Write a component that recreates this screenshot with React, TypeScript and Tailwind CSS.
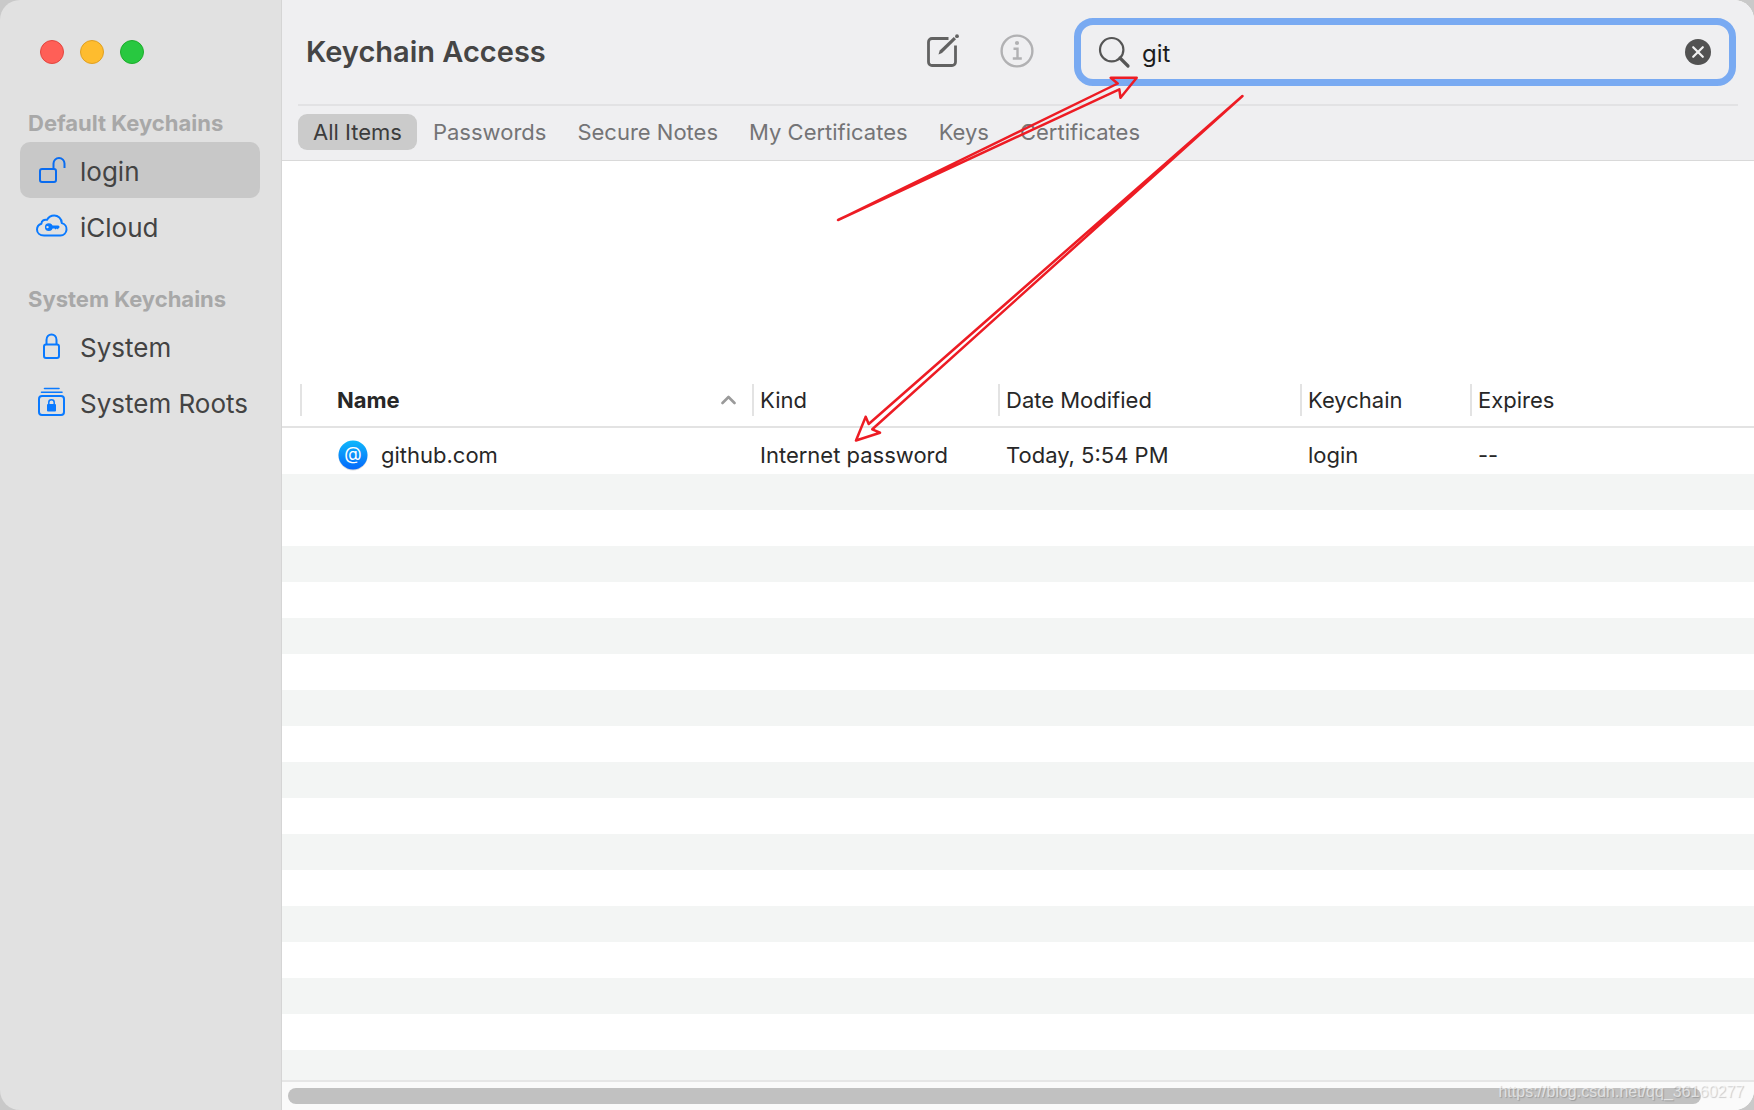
import { useState } from 'react'
import type { ReactNode } from 'react'

const tabs = ['All Items', 'Passwords', 'Secure Notes', 'My Certificates', 'Keys', 'Certificates']

const items = [
  { name: 'github.com', kind: 'Internet password', modified: 'Today, 5:54 PM', keychain: 'login', expires: '--' },
]

function UnlockedIcon() {
  return (
    <svg width="32" height="32" viewBox="0 0 32 32" fill="none" stroke="#0a6cf0" strokeWidth="2">
      <rect x="4" y="15" width="16" height="13" rx="2" />
      <path d="M17.500 15V9.500a5.500 5.500 0 0 1 11 0V14" />
    </svg>
  )
}

function CloudKeyIcon() {
  return (
    <svg width="32" height="32" viewBox="0 1 32 32" fill="none" stroke="#0a7aff" strokeWidth="2">
      <path d="M8 26.500h16.500a6.300 6.300 0 0 0 1.300-12.400C25.600 9.500 22 6.500 18.200 6.500c-3.200 0-5.800 1.700-7.200 4.400-2.800-.9-5.500.8-5.600 3.900C2.700 15.700 1 17.900 1 20.500c0 3.500 2.900 6 7 6z" strokeLinejoin="round" />
      <path d="M12.800 14.200a3.900 3.900 0 1 1 0 7.800 3.900 3.900 0 0 1 0-7.800zm-1.300 2.700a1.200 1.200 0 1 0 0 2.400 1.200 1.200 0 0 0 0-2.400z" fill="#0a7aff" fillRule="evenodd" stroke="none" />
      <path d="M15.500 16.600h7l1.300 1.300-1.400 1.500-.4 1.200-1.300-1-1 1-1.200-1h-3z" fill="#0a7aff" stroke="none" />
    </svg>
  )
}

function LockIcon() {
  return (
    <svg width="32" height="32" viewBox="0 0 32 32" fill="none" stroke="#0a7aff" strokeWidth="2">
      <rect x="8" y="14.500" width="15" height="13.500" rx="2" />
      <path d="M10.500 14.500V10c0-3.300 2.200-5.500 5-5.500s5 2.200 5 5.500v4.500" />
    </svg>
  )
}

function RootsIcon() {
  return (
    <svg width="32" height="32" viewBox="0 0 32 32" fill="none" stroke="#0a7aff" strokeWidth="2">
      <rect x="3" y="10" width="25" height="19" rx="3" />
      <path d="M5.500 6.200h20.500M8.500 2.500h14.500" strokeWidth="1.600" strokeLinecap="round" />
      <rect x="11" y="18" width="9" height="7.500" rx="1" fill="#0a7aff" stroke="none" />
      <path d="M12.800 18.500v-2.300c0-1.600 1.200-2.500 2.700-2.500s2.700.9 2.700 2.500v2.300" strokeWidth="1.500" />
    </svg>
  )
}

function SidebarSection({ title, children }: { title: string; children: ReactNode }) {
  return (
    <section>
      <h2 className="flex h-[38px] items-center pl-2 text-[22px] font-bold text-[#a8a8a8]">{title}</h2>
      {children}
    </section>
  )
}

function SidebarItem({ icon, label, active }: { icon: ReactNode; label: string; active?: boolean }) {
  return (
    <button
      className={`flex h-14 w-full items-center gap-3 rounded-[10px] pl-4 text-left text-[26px] text-[#434343] ${
        active ? 'bg-[#c8c8c8]' : ''
      }`}
    >
      {icon}
      <span className="pt-0.5">{label}</span>
    </button>
  )
}

function Sidebar() {
  return (
    <aside className="w-[282px] shrink-0 border-r border-[#d5d5d5] bg-[#e1e1e1] pr-[21px] pl-5">
      <div className="flex h-[104px] items-center gap-4 pl-5">
        <button aria-label="Close" className="size-6 rounded-full border border-[#e2463f] bg-[#ff5f57]" />
        <button aria-label="Minimize" className="size-6 rounded-full border border-[#dfa023] bg-[#febc2e]" />
        <button aria-label="Zoom" className="size-6 rounded-full border border-[#1dad2b] bg-[#28c840]" />
      </div>
      <nav className="flex flex-col gap-[26px]">
        <SidebarSection title="Default Keychains">
          <SidebarItem icon={<UnlockedIcon />} label="login" active />
          <SidebarItem icon={<CloudKeyIcon />} label="iCloud" />
        </SidebarSection>
        <SidebarSection title="System Keychains">
          <SidebarItem icon={<LockIcon />} label="System" />
          <SidebarItem icon={<RootsIcon />} label="System Roots" />
        </SidebarSection>
      </nav>
    </aside>
  )
}

function Toolbar() {
  const [search, setSearch] = useState('git')

  return (
    <div className="flex h-[104px] items-center pr-[18px] pl-6">
      <h1 className="flex-1 text-[29px] font-semibold text-[#454545]">Keychain Access</h1>
      <div className="mr-10 flex items-center gap-10 pb-0.5">
        <button aria-label="New item">
          <svg width="34" height="36" viewBox="0 0 34 36" fill="none" stroke="#626262" strokeWidth="2.800">
            <path d="M22.500 5.500H6A3.500 3.500 0 0 0 2.500 9v20A3.500 3.500 0 0 0 6 32.500h20a3.500 3.500 0 0 0 3.500-3.500V12.500" />
            <path d="M12.500 21.500l1.200-4L27.800 4l2.200 2.300L16 20z" fill="#626262" stroke="none" />
            <circle cx="31" cy="3.200" r="1.900" fill="#626262" stroke="none" />
          </svg>
        </button>
        <button aria-label="Information">
          <svg width="34" height="34" viewBox="0 0 34 34" fill="none" stroke="#b1b1b3" strokeWidth="2.400">
            <circle cx="17" cy="17" r="15.400" />
            <circle cx="17" cy="9" r="2.100" fill="#b1b1b3" stroke="none" />
            <path d="M13.500 14.800h4v9.500M12.800 24.500h9" />
          </svg>
        </button>
      </div>
      <div className="flex h-[68px] w-[662px] items-center rounded-[19px] border-[7px] border-[#79aaf2] pr-[18px] pl-[15px]">
        <svg width="36" height="36" viewBox="0 0 36 36" fill="none" stroke="#555555">
          <circle cx="15.700" cy="15.700" r="11.700" strokeWidth="2.200" />
          <path d="M24 24l8 8" strokeWidth="3.200" strokeLinecap="round" />
        </svg>
        <input
          aria-label="Search"
          value={search}
          onChange={(e) => setSearch(e.target.value)}
          className="ml-2.5 h-full min-w-0 flex-1 bg-transparent pt-0.5 text-[24px] text-[#1c1c1c] outline-none"
        />
        <button aria-label="Clear search" onClick={() => setSearch('')}>
          <svg width="26" height="26" viewBox="0 0 26 26">
            <circle cx="13" cy="13" r="13" fill="#525252" />
            <path d="M8.200 8.200l9.600 9.600M17.800 8.200l-9.600 9.600" stroke="#f2f2f2" strokeWidth="2.200" strokeLinecap="round" />
          </svg>
        </button>
      </div>
    </div>
  )
}

function FilterTabs() {
  const [activeTab, setActiveTab] = useState('All Items')

  return (
    <div className="mx-4 flex h-14 items-center gap-px border-t-2 border-[#e2e2e4] pb-0.5">
      {tabs.map((tab) => (
        <button
          key={tab}
          onClick={() => setActiveTab(tab)}
          className={`h-9 rounded-[9px] px-[15px] text-[22px] whitespace-nowrap ${
            tab === activeTab ? 'bg-[#cbcbcb] text-[#3c3c3c]' : 'text-[#747476]'
          }`}
        >
          {tab}
        </button>
      ))}
    </div>
  )
}

function HeaderCell({ children }: { children: ReactNode }) {
  return (
    <th className="p-0 font-normal">
      <div className="flex h-8 items-center border-l-2 border-[#e3e3e3] pl-1.5">{children}</div>
    </th>
  )
}

function ItemsTable() {
  return (
    <table className="w-full table-fixed border-separate border-spacing-0 text-left text-[22px] text-[#272727]">
      <colgroup>
        <col className="w-[18px]" />
        <col className="w-[452px]" />
        <col className="w-[246px]" />
        <col className="w-[302px]" />
        <col className="w-[170px]" />
        <col />
      </colgroup>
      <thead>
        <tr className="h-[54px] *:border-b-2 *:border-[#e3e3e3]">
          <td />
          <th className="p-0" aria-sort="ascending">
            <div className="flex h-8 items-center justify-between border-l-2 border-[#e3e3e3] pr-4 pl-[35px] font-bold">
              Name
              <svg width="15" height="10" viewBox="0 0 15 10" fill="none" stroke="#9a9a9a" strokeWidth="2.600" strokeLinecap="round" strokeLinejoin="round">
                <path d="M1.500 8l6-6 6 6" />
              </svg>
            </div>
          </th>
          <HeaderCell>Kind</HeaderCell>
          <HeaderCell>Date Modified</HeaderCell>
          <HeaderCell>Keychain</HeaderCell>
          <HeaderCell>Expires</HeaderCell>
        </tr>
      </thead>
      <tbody>
        {items.map((item) => (
          <tr key={item.name} className="h-[46px] whitespace-nowrap">
            <td />
            <td className="px-0 pt-2 pb-0">
              <div className="flex items-center gap-[13px] pl-[38px]">
                <svg width="30" height="32" viewBox="0 0 30 32">
                  <defs>
                    <linearGradient id="at" x1="0" y1="0" x2="0" y2="1">
                      <stop offset="0" stopColor="#0fb8fb" />
                      <stop offset="1" stopColor="#0468fb" />
                    </linearGradient>
                  </defs>
                  <circle cx="15" cy="17" r="14.500" fill="#000000" opacity="0.150" />
                  <circle cx="15" cy="16" r="14.500" fill="url(#at)" />
                  <text x="15" y="21" textAnchor="middle" fontSize="18" fill="#ffffff" fontFamily="Inter, sans-serif">@</text>
                </svg>
                {item.name}
              </div>
            </td>
            <td className="px-2 pt-2 pb-0">{item.kind}</td>
            <td className="px-2 pt-2 pb-0">{item.modified}</td>
            <td className="px-2 pt-2 pb-0">{item.keychain}</td>
            <td className="px-2 pt-2 pb-0">{item.expires}</td>
          </tr>
        ))}
      </tbody>
    </table>
  )
}

function Arrows() {
  return (
    <svg
      className="pointer-events-none absolute top-0 left-0"
      width="1260"
      height="460"
      viewBox="0 0 1260 460"
      fill="none"
      stroke="#ed1c24"
      strokeWidth="2.500"
      strokeLinejoin="round"
      aria-hidden="true"
    >
      <path d="M838 220L1117.700 83.500l-7-5.800h26L1120.500 97.700l-1.200-8.400z" />
      <path d="M1242.500 96L868.700 424l-3-7.300L856 440.500l24-7.800-7.700-3.400z" />
    </svg>
  )
}

export default function App() {
  return (
    <div className="h-screen bg-[#c9c9c9] font-['Inter',sans-serif]">
      <div className="relative flex h-full overflow-hidden rounded-[20px]">
        <Sidebar />
        <main className="flex min-w-0 flex-1 flex-col bg-white">
          <header className="border-b border-[#d9d9d9] bg-[#efeff1]">
            <Toolbar />
            <FilterTabs />
          </header>
          <div className="h-[213px] shrink-0" />
          <ItemsTable />
          <div className="min-h-0 flex-1 overflow-hidden" aria-hidden="true">
            {Array.from({ length: 17 }, (_, i) => (
              <div key={i} className="h-9 odd:bg-[#f3f5f4]" />
            ))}
          </div>
          <div className="h-[30px] shrink-0 border-t-2 border-[#e6e6e6] bg-[#fafafa] pt-1.5 pr-[53px] pl-1.5">
            <div className="h-4 rounded-full bg-[#c1c1c1]" />
          </div>
        </main>
        <Arrows />
        <div className="absolute right-2.5 bottom-2 font-['Liberation_Sans',sans-serif] text-[16px] leading-5 text-white/60 [text-shadow:1px_1px_1px_#00000030]">
          https://blog.csdn.net/qq_36160277
        </div>
      </div>
    </div>
  )
}
